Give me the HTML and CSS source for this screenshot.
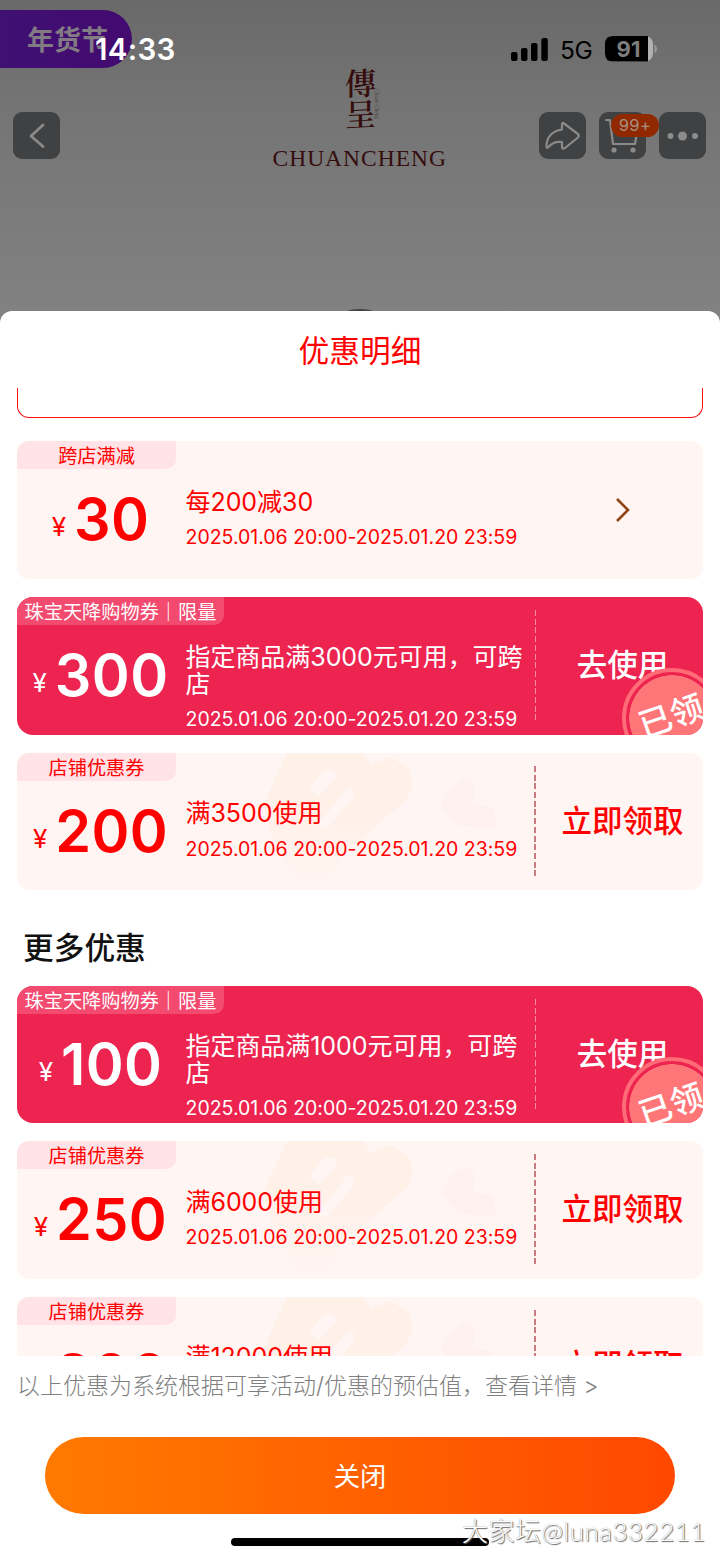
FILE: index.html
```html
<!DOCTYPE html>
<html lang="zh-CN">
<head>
<meta charset="utf-8">
<title>优惠明细</title>
<link rel="stylesheet" href="styles.css">
</head>
<body>
<svg width="0" height="0" class="defs">
  <linearGradient id="fade" x1="0" y1="0" x2="0" y2="1"><stop offset=".4" stop-color="#fff0e8"/><stop offset="1" stop-color="#fff0e8" stop-opacity=".15"/></linearGradient>
  <symbol id="deco" viewBox="0 0 260 138">
    <path d="M42 0H118L126 12L146 4L164 16L168 32L162 46L128 76Q120 88 98 96L84 130H52Q36 100 26 80L18 52Z" fill="url(#fade)"/>
    <path d="M64 36L78 17Q91 13 92 24L74 44ZM82 60L102 35Q112 32 108 45L84 74Q74 78 72 70Z" fill="#fff5f2"/>
    <path d="M206 34L220 26L230 32L228 52L248 54L252 76L212 72L196 52Z" fill="#fff1ee"/>
  </symbol>
</svg>
<div class="phone">
  <header class="shop">
    <div class="festival">年货节</div>
    <div class="status">
      <span class="clock">14:33</span>
      <div class="signals">
        <svg width="38" height="24" viewBox="0 0 38 24"><rect x="0" y="15" width="6.5" height="9" rx="2"/><rect x="10" y="11" width="6.5" height="13" rx="2"/><rect x="20" y="6" width="6.5" height="18" rx="2"/><rect x="30.300" y="1" width="6.5" height="23" rx="2"/></svg>
        <span class="net">5G</span>
        <svg class="battery" width="52" height="26" viewBox="0 0 52 26"><rect width="48" height="25.500" rx="8" fill="#b2b2b2"/><path d="M8 0H43V25.500H8Q0 25.500 0 17.500V8Q0 0 8 0Z"/><path d="M49.500 8.500Q52 9.500 52 13Q52 16 49.500 17Z" fill="#999"/><text x="23.500" y="20.500">91</text></svg>
      </div>
    </div>
    <nav class="tools">
      <button class="tool"><svg viewBox="0 0 47 47"><path d="M30 13L18 24L30 34.500"/></svg></button>
      <div class="logo">
        <div class="seal"><span>傳</span><span>呈</span><i>Chuan Cheng</i></div>
        <div class="brand">CHUANCHENG</div>
      </div>
      <div class="right">
        <button class="tool"><svg viewBox="0 0 47 47"><path class="thin" d="M23 12.500Q23 10 25 11.500L39 22Q40.500 24 39 25.500L26 36Q23 37.500 23 35V30Q14 29 9.500 35Q7.500 37 7.500 34Q8 20 23 17.500Z"/></svg></button>
        <button class="tool"><svg viewBox="0 0 47 47"><path class="thin" d="M7 8H11L14 32H36L39 14"/><circle cx="15" cy="38" r="2.600"/><circle cx="34" cy="38" r="2.600"/></svg><b class="badge">99+</b></button>
        <button class="tool"><svg viewBox="0 0 47 47"><circle cx="11.500" cy="24" r="3"/><circle cx="23.500" cy="24" r="4.500"/><circle cx="36" cy="24" r="3"/></svg></button>
      </div>
    </nav>
    <div class="avatar"></div>
  </header>

  <main class="sheet">
    <h1>优惠明细</h1>
    <div class="list">
      <div class="outline"></div>
      <article class="card">
        <div class="tag">跨店满减</div>
        <div class="amount"><small>¥</small><strong>30</strong></div>
        <div class="info"><h3>每200减30</h3><p>2025.01.06 20:00-2025.01.20 23:59</p></div>
        <div class="action"><svg class="chev" width="16" height="26" viewBox="0 0 16 26"><path d="M2 2L13 13L2 24"/></svg></div>
      </article>
      <article class="card red">
        <div class="tag">珠宝天降购物券｜限量</div>
        <div class="amount"><small>¥</small><strong>300</strong></div>
        <div class="info"><h3>指定商品满3000元可用，可跨店</h3><p>2025.01.06 20:00-2025.01.20 23:59</p></div>
        <div class="action ruled">去使用</div>
        <div class="stamp"><span>已领</span></div>
      </article>
      <article class="card">
        <svg class="deco"><use href="#deco"/></svg>
        <div class="tag">店铺优惠券</div>
        <div class="amount"><small>¥</small><strong>200</strong></div>
        <div class="info"><h3>满3500使用</h3><p>2025.01.06 20:00-2025.01.20 23:59</p></div>
        <div class="action ruled">立即领取</div>
      </article>
      <h2>更多优惠</h2>
      <article class="card red">
        <div class="tag">珠宝天降购物券｜限量</div>
        <div class="amount"><small>¥</small><strong>100</strong></div>
        <div class="info"><h3>指定商品满1000元可用，可跨店</h3><p>2025.01.06 20:00-2025.01.20 23:59</p></div>
        <div class="action ruled">去使用</div>
        <div class="stamp"><span>已领</span></div>
      </article>
      <article class="card">
        <svg class="deco"><use href="#deco"/></svg>
        <div class="tag">店铺优惠券</div>
        <div class="amount"><small>¥</small><strong>250</strong></div>
        <div class="info"><h3>满6000使用</h3><p>2025.01.06 20:00-2025.01.20 23:59</p></div>
        <div class="action ruled">立即领取</div>
      </article>
      <article class="card">
        <svg class="deco"><use href="#deco"/></svg>
        <div class="tag">店铺优惠券</div>
        <div class="amount"><small>¥</small><strong>800</strong></div>
        <div class="info"><h3>满12000使用</h3><p>2025.01.06 20:00-2025.01.20 23:59</p></div>
        <div class="action ruled">立即领取</div>
      </article>
    </div>
    <p class="note">以上优惠为系统根据可享活动/优惠的预估值，查看详情 &gt;</p>
    <button class="close">关闭</button>
    <div class="home"></div>
  </main>
  <div class="watermark">大家坛@luna332211</div>
</div>
</body>
</html>
```

FILE: styles.css
```css
* { box-sizing: border-box; margin: 0; padding: 0; }
body { background: #fff; font-family: Inter, "Noto Sans CJK SC", sans-serif; }
button { border: 0; font: inherit; }
.defs { position: absolute; }
.phone { position: relative; width: 720px; height: 1560px; overflow: hidden; }

.shop { position: relative; height: 311px; padding-top: 10px; background: linear-gradient(#696969, #747474 33%, #818181); }
.shop::after { content: ""; position: absolute; left: 0; bottom: -14px; width: 100%; height: 14px; background: #818181; }
.festival {
  width: 132px; height: 58px; padding-left: 27px; border-radius: 0 29px 29px 0;
  background: linear-gradient(90deg, #401073, #430a70); color: #827b83;
  font: 700 27px/57px "Noto Sans CJK SC", sans-serif; white-space: nowrap;
}
.status { position: absolute; top: 32px; left: 95px; right: 63px; height: 34px; display: flex; justify-content: space-between; align-items: center; }
.clock { color: #fff; font-size: 29.500px; font-weight: 600; letter-spacing: .3px; }
.signals { display: flex; align-items: center; }
.net { margin: 1px 0 0 11px; width: 33px; font-size: 24.500px; letter-spacing: -.3px; }
.battery { margin-left: 12px; }
.battery text { font-size: 22px; font-weight: 700; fill: #7d7d7d; text-anchor: middle; }
.tools { display: flex; justify-content: space-between; padding: 0 14px 0 13px; height: 110px; }
.tool { position: relative; width: 47px; height: 47px; margin-top: 44px; border-radius: 9px; background: #404142; }
.tool svg { display: block; width: 47px; height: 47px; }
.tool path { fill: none; stroke: #8a8a8a; stroke-width: 2.800; stroke-linecap: round; stroke-linejoin: round; }
.tool path.thin { stroke-width: 2.200; }
.tool circle { fill: #8b8b8b; }
.badge { position: absolute; left: 12px; top: 2px; z-index: 2; width: 48px; height: 23px; border-radius: 12px; background: #902900; color: #a98f84; font-size: 16.500px; font-weight: 400; line-height: 23px; letter-spacing: .4px; }
.right { display: flex; gap: 13px; }
.logo { width: 178px; margin-left: 124px; color: #360d0d; }
.seal { position: relative; display: flex; flex-direction: column; align-items: center; height: 77px; padding-right: 2px; font: 600 31px/28px "Noto Serif CJK SC", "Noto Sans CJK TC", serif; }
.seal span { height: 31px; transform: skewY(-3deg); }
.seal i { position: absolute; left: 101px; top: 21px; writing-mode: vertical-rl; font: 5.500px/6px "Liberation Serif", serif; opacity: .5; }
.brand { font: 23.500px/26px "Liberation Serif", serif; letter-spacing: 1px; white-space: nowrap; }
.avatar { position: absolute; left: 315px; top: 309px; width: 90px; height: 90px; border-radius: 50%; background: #444; z-index: 1; }

.sheet { position: relative; z-index: 2; display: flex; flex-direction: column; height: 1249px; border-radius: 12px 12px 0 0; background: #fff; }
h1 { height: 77px; color: #f00; font-size: 30.700px; font-weight: 400; line-height: 79px; text-align: center; }
.list { height: 968px; padding: 0 17px; overflow: hidden; }
.outline { height: 30px; margin-bottom: 23.200px; border: 1.300px solid #ff0f0f; border-top: 0; border-radius: 0 0 12px 12px; }
.card {
  position: relative; display: grid; grid-template-columns: 169px 348px 169px; height: 137.800px; margin-bottom: 17.900px;
  overflow: hidden; border-radius: 12px; background: #fff5f2; color: #f00;
}
.card.red { background: #ec244f; color: #fff; border-radius: 16px; }
.tag { position: absolute; left: 0; top: 0; width: 159px; height: 28px; border-radius: 0 0 10px 0; background: #ffe3e6; font-size: 19.200px; line-height: 30px; text-align: center; white-space: nowrap; }
.red .tag { width: 207px; background: #f34b70; }
.amount { display: flex; justify-content: center; align-items: baseline; gap: 8px; padding: 43px 2px 0 0; line-height: 70px; }
.amount small { position: relative; top: -4px; font-size: 26px; }
.amount strong { font-size: 57.500px; font-weight: 600; letter-spacing: .4px; }
.info { position: relative; left: -.5px; padding-top: 47.500px; }
.info h3 { width: 346px; font-size: 25px; font-weight: 400; line-height: 27px; letter-spacing: -.05px; }
.info p { margin-top: 9.500px; font-size: 19.500px; line-height: 24px; letter-spacing: -.01px; white-space: nowrap; }
.red .info p { margin-top: 8.500px; }
.action { position: relative; padding: 46px 0 0 8px; font-size: 30.500px; line-height: 44px; font-weight: 500; text-align: center; }
.ruled::before { content: ""; position: absolute; left: 0; top: 13px; width: 2px; height: 110px; background: repeating-linear-gradient(#c67c80 0 6px, transparent 6px 8.700px); }
.red .ruled::before { width: 1px; left: 1px; background: repeating-linear-gradient(#f68aa1 0 6px, transparent 6px 8.700px); }
.chev { display: block; margin: 10px auto 0; }
.chev path { fill: none; stroke: #8f4518; stroke-width: 2.600; }
.stamp { position: absolute; left: 605px; top: 71px; width: 100px; height: 100px; border: 4px solid #ff6c78; border-radius: 50%; background: radial-gradient(circle, #ff7678 0 42.500px, #ec244f 43px); }
.stamp span { position: absolute; left: 12px; top: 24px; font-size: 33px; font-weight: 500; line-height: 40px; white-space: nowrap; transform: rotate(-19deg); }
.deco { position: absolute; left: 228px; top: 0; width: 260px; height: 138px; }
h2 { height: 77.300px; padding-left: 6px; color: #111; font-size: 30.700px; font-weight: 500; line-height: 79px; }
.note { height: 81px; padding-left: 17px; color: #808080; font: 300 23px/60px Inter, "Noto Sans CJK SC", sans-serif; white-space: nowrap; }
.close { width: 630px; height: 77px; margin: 0 45px; border-radius: 39px; background: linear-gradient(90deg, #ff7a00, #ff4800); color: #fff; font-size: 26.300px; line-height: 79px; }
.home { width: 258px; height: 8px; margin: 24px auto 0; border-radius: 4px; background: #000; }
.watermark { position: absolute; z-index: 3; left: 462px; top: 1514px; color: #fff; font: 300 26px/34px Lato, "Noto Sans CJK SC", sans-serif; letter-spacing: .5px; white-space: nowrap; text-shadow: 1px 1px 1px #666, 0 0 1px #888; }
```
